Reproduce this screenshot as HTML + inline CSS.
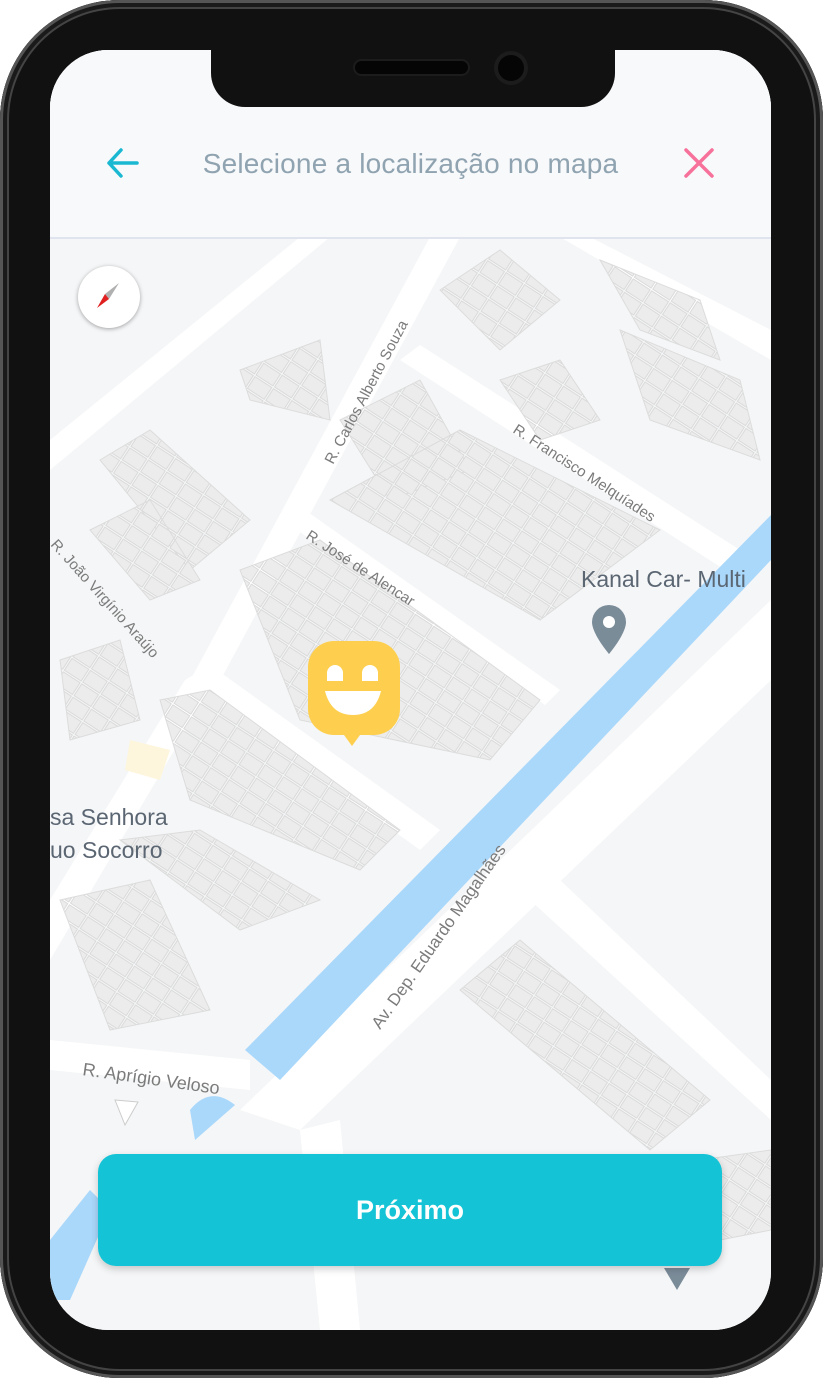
<!DOCTYPE html>
<html><head><meta charset="utf-8"><style>
html,body{margin:0;padding:0;background:#fff;}
body{width:825px;height:1380px;position:relative;overflow:hidden;font-family:"Liberation Sans",sans-serif;}
.phone{position:absolute;left:0;top:0;width:823px;height:1378px;border-radius:120px;background:#111;box-shadow:inset 0 0 0 3px #555,inset 0 0 0 7px #1a1a1a,inset 0 0 0 9px #444;}
.screen{position:absolute;left:50px;top:50px;width:721px;height:1280px;border-radius:58px;overflow:hidden;background:#f8f9fa;}
.notch{position:absolute;left:211px;top:40px;width:404px;height:67px;background:#111;border-radius:0 0 34px 34px;}
.spk{position:absolute;left:355px;top:61px;width:113px;height:13px;border-radius:7px;background:#050505;box-shadow:0 0 0 2px #1c1c1c;}
.cam{position:absolute;left:498px;top:55px;width:26px;height:26px;border-radius:50%;background:#050505;box-shadow:0 0 0 4px #1c1c1c;}
.header{position:absolute;left:0;top:0;width:721px;height:187px;background:#f8f9fb;border-bottom:2px solid #dfe4ee;}
.title{position:absolute;left:0;width:721px;top:98px;text-align:center;font-size:28px;color:#8fa3b0;letter-spacing:0.2px;}
.btn{position:absolute;left:48px;top:1104px;width:624px;height:112px;border-radius:18px;background:#14c4d6;color:#fff;font-weight:bold;font-size:27px;text-align:center;line-height:112px;box-shadow:0 3px 8px rgba(0,0,0,.2);}
.compass{position:absolute;left:28px;top:216px;width:62px;height:62px;border-radius:50%;background:#fff;box-shadow:0 1px 4px rgba(0,0,0,.35);}
</style></head><body>
<div class="phone"></div>
<div class="screen">
<svg width="721" height="1280" style="position:absolute;left:0;top:0" viewBox="50 50 721 1280">
<defs>
<pattern id="b" width="22" height="16" patternUnits="userSpaceOnUse" patternTransform="rotate(33)">
<rect x="1" y="1" width="20" height="14" fill="#ececec" stroke="#dadada" stroke-width="1"/>
</pattern>
</defs>
<rect x="50" y="50" width="721" height="1280" fill="#f5f6f7"/>
<g fill="#ffffff" stroke="none">
<path d="M50 440 L300 237 L330 237 L50 470Z"/>
<path d="M430 237 L460 237 L215 690 L185 690Z"/>
<path d="M400 360 L420 345 L740 550 L725 570Z"/>
<path d="M290 525 L305 510 L560 690 L545 705Z"/>
<path d="M185 680 L210 665 L440 830 L420 850Z"/>
<path d="M185 680 L210 690 L50 960 L50 900Z"/>
<path d="M560 237 L590 237 L771 330 L771 360Z"/>
<path d="M771 600 L771 680 L300 1130 L240 1110Z"/>
<path d="M50 1040 L250 1060 L250 1090 L50 1070Z"/>
<path d="M530 900 L560 880 L771 1080 L771 1120Z"/>
<path d="M300 1130 L340 1120 L360 1330 L320 1330Z"/>
</g>
<g fill="url(#b)" stroke="#dcdcdc" stroke-width="1">
<path d="M440 290 L500 250 L560 300 L500 350Z"/>
<path d="M600 260 L700 300 L720 360 L640 330Z"/>
<path d="M500 380 L560 360 L600 420 L540 440Z"/>
<path d="M620 330 L740 380 L760 460 L650 420Z"/>
<path d="M340 420 L420 380 L470 470 L390 500Z"/>
<path d="M330 500 L460 430 L660 530 L540 620 Z"/>
<path d="M240 370 L320 340 L330 420 L250 400Z"/>
<path d="M100 460 L150 430 L250 520 L190 570Z"/>
<path d="M90 530 L150 500 L200 580 L150 600Z"/>
<path d="M240 570 L320 540 L540 700 L490 760 L300 720Z"/>
<path d="M160 700 L210 690 L400 830 L360 870 L190 800Z"/>
<path d="M120 840 L200 830 L320 900 L240 930Z"/>
<path d="M60 900 L150 880 L210 1010 L110 1030Z"/>
<path d="M60 660 L120 640 L140 720 L70 740Z"/>
<path d="M460 990 L520 940 L710 1100 L650 1150Z"/>
<path d="M700 1160 L771 1150 L771 1230 L720 1240Z"/>
</g>
<path d="M130 740 L170 750 L160 780 L125 770Z" fill="#fdf5dc"/>
<path d="M771 515 L771 560 L280 1080 L245 1050Z" fill="#aad8fb"/>
<path d="M190 1110 Q210 1085 235 1105 L195 1140Z" fill="#aad8fb"/>
<path d="M50 1240 L90 1190 L110 1210 L70 1300 L50 1300Z" fill="#aad8fb"/>
<path d="M115 1100 L138 1102 L125 1125Z" fill="#fff" stroke="#ccc"/>
<g font-family="Liberation Sans,sans-serif" fill="#7b7b7b" font-size="15">
<text transform="translate(333,465) rotate(-62)">R. Carlos Alberto Souza</text>
<text transform="translate(512,432) rotate(33)">R. Francisco Melquíades</text>
<text transform="translate(305,538) rotate(33)">R. José de Alencar</text>
<text transform="translate(50,545) rotate(48)">R. João Virgínio Araújo</text>
<text transform="translate(380,1030) rotate(-55)" font-size="17">Av. Dep. Eduardo Magalhães</text>
<text transform="translate(82,1075) rotate(8)" font-size="18">R. Aprígio Veloso</text>
</g>
<g font-family="Liberation Sans,sans-serif" fill="#5b6673" font-size="23">
<text x="581" y="587">Kanal Car- Multi</text>
<text x="50" y="825">sa Senhora</text>
<text x="50" y="858">uo Socorro</text>
</g>
<path d="M609 605 a17 17 0 0 1 17 17 c0 12 -17 32 -17 32 c0 0 -17 -20 -17 -32 a17 17 0 0 1 17 -17z" fill="#7b8c99"/>
<circle cx="609" cy="622" r="6" fill="#fff"/>
<path d="M664 1268 L690 1268 L677 1290Z" fill="#7b8c99"/>
<path d="M334 641 h40 a26 26 0 0 1 26 26 v42 a26 26 0 0 1 -26 26 h-14 l-8 11 l-8 -11 h-10 a26 26 0 0 1 -26 -26 v-42 a26 26 0 0 1 26 -26z" fill="#fecf4f"/>
<path d="M327 681 v-8 a8 8 0 0 1 16 0 v8z M362 681 v-8 a8 8 0 0 1 16 0 v8z" fill="#fff"/>
<path d="M325 691 h56 q-6 24 -28 24 q-22 0 -28 -24z" fill="#fff"/>
</svg>
<div class="header">
<svg style="position:absolute;left:55px;top:97px" width="36" height="32" viewBox="0 0 36 32"><path d="M32 16 H4 M16 3 L4 16 L16 29" stroke="#1bb8d2" stroke-width="3.5" fill="none" stroke-linecap="round" stroke-linejoin="round"/></svg>
<div class="title">Selecione a localização no mapa</div>
<svg style="position:absolute;left:634px;top:98px" width="30" height="30" viewBox="0 0 30 30"><path d="M2 2 L28 28 M28 2 L2 28" stroke="#f7729b" stroke-width="3.5" stroke-linecap="round"/></svg>
</div>
<div class="compass"><svg width="62" height="62" viewBox="0 0 62 62"><path d="M41 17 L31 33 L27 28Z" fill="#b0b0b0"/><path d="M19 42 L27 28 L31 33Z" fill="#e02020"/></svg></div>
<div class="btn">Próximo</div>
</div>
<div class="notch"></div>
<div class="spk"></div>
<div class="cam"></div>
</body></html>
